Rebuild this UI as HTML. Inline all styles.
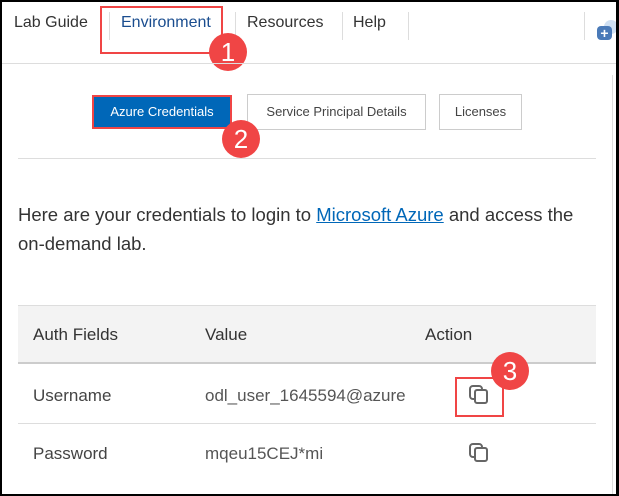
<!DOCTYPE html>
<html><head><style>
*{margin:0;padding:0;box-sizing:border-box}
body{width:619px;height:496px;overflow:hidden;background:#fff;font-family:"Liberation Sans",sans-serif;position:relative}
.a{position:absolute}
.nav{font-size:16px;color:#333;top:14px}
.sep{width:1px;background:#ddd;top:12px;height:28px}
.circ{width:38px;height:38px;border-radius:50%;background:#f04545;color:#fff;font-size:26px;text-align:center;line-height:38px}
.btn{border:1px solid #ccc;font-size:13px;color:#444;text-align:center;background:#fff}
.t{font-size:17px;color:#333}
</style></head><body>
<div class="a" style="left:0;top:0;width:619px;height:496px;border:2px solid #000;border-right-width:3px;z-index:10;pointer-events:none"></div>
<div class="a nav" style="left:14px">Lab Guide</div>
<div class="a sep" style="left:109px"></div>
<div class="a nav" style="left:121px;color:#1a4d8f">Environment</div>
<div class="a sep" style="left:235px"></div>
<div class="a nav" style="left:247px">Resources</div>
<div class="a sep" style="left:342px"></div>
<div class="a nav" style="left:353px">Help</div>
<div class="a sep" style="left:408px"></div>
<div class="a sep" style="left:584px"></div>
<div class="a" style="left:604px;top:20px;width:14px;height:14px;border-radius:50%;background:#cfe0f3"></div>
<div class="a" style="left:597px;top:26px;width:15px;height:14px;border-radius:4px;background:#4a7ab8;color:#fff;font-size:14px;font-weight:bold;line-height:14px;text-align:center">+</div>
<div class="a" style="left:100px;top:6px;width:123px;height:48px;border:2px solid #f04545"></div>
<div class="a circ" style="left:209px;top:33px">1</div>
<div class="a" style="left:2px;top:63px;width:614px;height:1px;background:#ddd"></div>
<div class="a" style="left:612px;top:75px;width:1px;height:420px;background:#ddd"></div>
<div class="a btn" style="left:92px;top:95px;width:140px;height:34px;background:#0067b8;color:#fff;border:2px solid #f04545;line-height:30px">Azure Credentials</div>
<div class="a btn" style="left:247px;top:94px;width:179px;height:36px;line-height:34px">Service Principal Details</div>
<div class="a btn" style="left:439px;top:94px;width:83px;height:36px;line-height:34px">Licenses</div>
<div class="a circ" style="left:222px;top:120px">2</div>
<div class="a" style="left:18px;top:158px;width:578px;height:1px;background:#ddd"></div>
<div class="a t" style="left:18px;top:200px;line-height:29px;width:595px;font-size:18.5px">Here are your credentials to login to <span style="color:#0067b8;text-decoration:underline">Microsoft Azure</span> and access the <span style="white-space:nowrap">on-demand</span> lab.</div>
<div class="a" style="left:18px;top:305px;width:578px;height:59px;background:#f3f3f3;border-top:1px solid #ddd;border-bottom:2px solid #ccc"></div>
<div class="a t" style="left:33px;top:325px">Auth Fields</div>
<div class="a t" style="left:205px;top:325px">Value</div>
<div class="a t" style="left:425px;top:325px">Action</div>
<div class="a t" style="left:33px;top:386px;color:#444">Username</div>
<div class="a t" style="left:205px;top:386px;color:#555;width:204px;overflow:hidden;white-space:nowrap">odl_user_1645594@azure</div>
<div class="a" style="left:18px;top:423px;width:578px;height:1px;background:#ddd"></div>
<div class="a t" style="left:33px;top:444px;color:#444">Password</div>
<div class="a t" style="left:205px;top:444px;color:#555">mqeu15CEJ*mi</div>
<svg class="a" style="left:468px;top:384px" width="22" height="22" viewBox="0 0 22 22" fill="none" stroke="#666" stroke-width="2"><rect x="2" y="2" width="12" height="13" rx="3"/><rect x="7" y="6" width="12" height="13" rx="2" fill="#fff"/></svg>
<svg class="a" style="left:468px;top:442px" width="22" height="22" viewBox="0 0 22 22" fill="none" stroke="#666" stroke-width="2"><rect x="2" y="2" width="12" height="13" rx="3"/><rect x="7" y="6" width="12" height="13" rx="2" fill="#fff"/></svg>
<div class="a" style="left:455px;top:377px;width:49px;height:40px;border:2px solid #f04545"></div>
<div class="a circ" style="left:491px;top:352px">3</div>
</body></html>
